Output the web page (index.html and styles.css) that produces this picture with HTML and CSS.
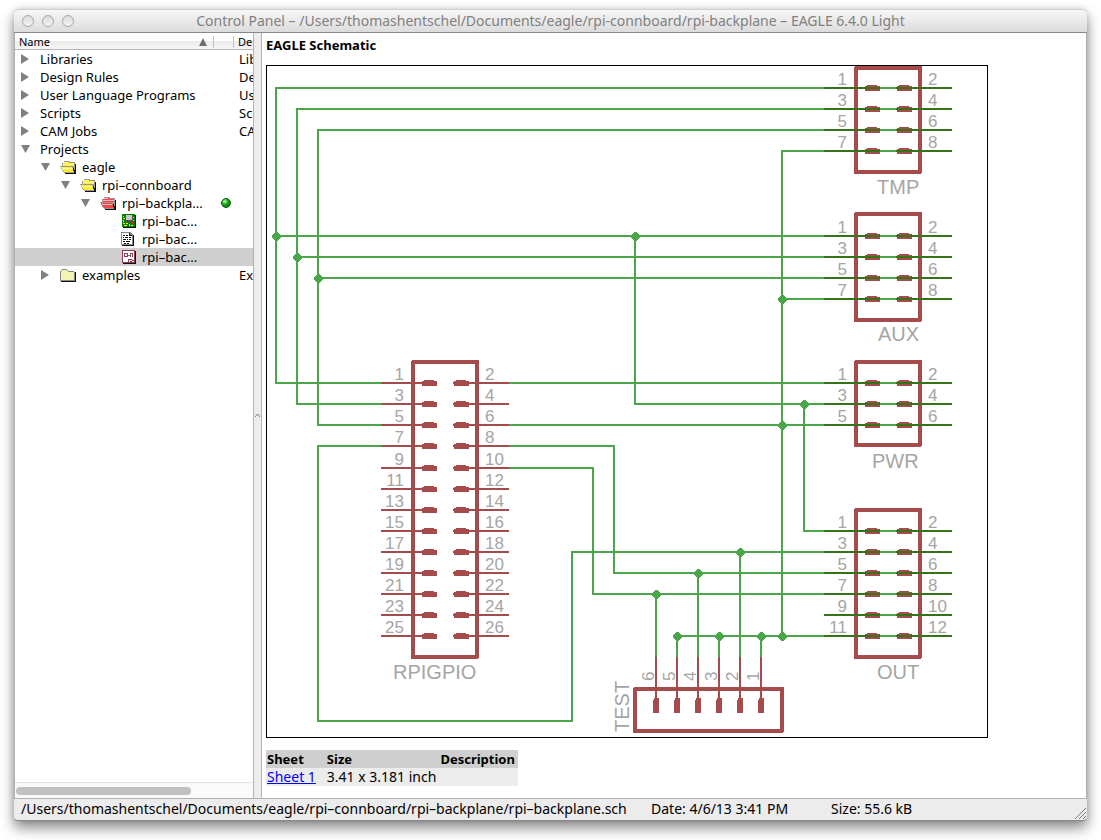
FILE: index.html
```html
<!DOCTYPE html>
<html lang="en">
<head>
<meta charset="utf-8">
<title>Control Panel</title>
<link rel="stylesheet" href="styles.css">
</head>
<body>
<svg class="defs" aria-hidden="true">
  <defs>
    <symbol id="folder-open" viewBox="0 0 16 13">
      <path fill="#999" d="M4 0h5l1 1h4l1 1v9h1v2H5L3 11 0 5h2V2h2z"/>
      <path fill="currentColor" d="M4 1h4l1 1h5v3H3V2h1z"/>
      <path fill="currentColor" d="M1 6h11l2 5H4z"/>
      <path fill="#fff" d="M4 1h4v1H4zM3 3h11v1H3zM2 7h10v1H2z" opacity=".6"/>
      <path fill="#111" d="M15 3h1v10H5v-1h10zM13 7h1v2h1v3h-1z"/>
    </symbol>
    <symbol id="folder" viewBox="0 0 16 13">
      <path fill="#888" d="M2 0h5v1h1v1h6v1h1v9H0V2h1V1h1z"/>
      <path fill="currentColor" d="M2 1h5v1h1v1h6v8H1V2h1z"/>
      <path fill="#111" d="M15 3h1v10H1v-1h14z"/>
    </symbol>
    <symbol id="board" viewBox="0 0 15 14">
      <path fill="#008000" d="M1 0h13v13H1z"/>
      <path fill="#111" d="M14 1h1v13H2v-1h12z"/>
      <path fill="#c8c8c8" d="M5 1h6v5H5z"/><path fill="#555" d="M5 6h1v2H5zM7 6h1v2H7zM9 6h1v2H9zM11 2h1v5h-1z"/>
      <path fill="#ffee00" d="M2 2h1v1H2zM2 4h2v1H2zM2 6h1v2H2zM2 9h2v1H2zM5 9h2v1H5zM3 11h3v1H3zM8 10h1v2H8zM12 3h1v1h-1zM10 11h2v1h-2zM12 6h1v1h-1z"/>
      <path fill="#f01010" d="M11 8h2v2h-2z"/>
    </symbol>
    <symbol id="document" viewBox="0 0 15 14">
      <path fill="#888" d="M0 0h9l3 3v10H0z"/><path fill="#fff" d="M1 1h7v3h3v8H1z"/>
      <path fill="#111" d="M12 3h1v11H1v-1h11zM8 1h1v2h2v1H8zM2 3h2v1H2zM5 3h2v1H5zM2 5h1v1H2zM4 5h3v1H4zM8 5h2v1H8zM2 7h3v1H2zM6 7h1v1H6zM8 7h2v1H8zM2 9h2v1H2zM5 9h4v1H5zM3 11h2v1H3zM6 11h2v1H6z"/>
    </symbol>
    <symbol id="schematic" viewBox="-1 0 15 14">
      <path fill="#8f3b52" d="M0 0h13v13H0z"/><path fill="#fff" d="M1 1h11v11H1z"/><path fill="#111" d="M13 1h1v13H1v-1h12z"/>
      <path fill="#8f3b52" d="M2 3h4v1H2zM2 6h4v1H2zM5 3h1v4H5zM2 3h1v4H2zM8 3h3v1H8zM8 3h1v4H8zM10 3h1v4h-1zM6 9h4v1H6zM6 9h1v3H6zM10 10h2v1h-2zM8 11h2v1H8z"/>
      <path fill="#2b9b55" d="M6 5h2v1H6z"/>
    </symbol>
    <g id="row-dual">
      <path fill="#a54b4b" d="M41 -2h2v-1h10v1h3v5H41zM73 -2h2v-1h10v1h3v5H73z"/>
      <path class="pin-net" d="M0 0H128"/><path class="net" d="M56 0H72"/>
    </g>
    <g id="row-gpio">
      <path class="part-line" d="M0 0H42M87 0H128"/>
      <path fill="#a54b4b" d="M41 -2h2v-1h10v1h3v5H41zM72 -1h1v-1h2v-1h10v1h3v5H73v-2h-1z"/>
    </g>
    <g id="pin-test">
      <path class="part-line" d="M0 0V42"/>
      <path fill="#a54b4b" d="M-2 41H3V56H-3V43h1z"/>
    </g>
    <path id="joint" fill="#4ba54b" d="M-1 -4H2V-3H3V-2H4V-1H5V2H4V3H3V4H2V5H-1V4H-2V3H-3V2H-4V-1H-3V-2H-2V-3H-1z"/>
  </defs>
</svg>

<div class="window">
  <header class="titlebar">
    <div class="lights"><button class="light" aria-label="Close"></button><button class="light" aria-label="Minimize"></button><button class="light" aria-label="Zoom"></button></div>
    <h1 class="title">Control Panel – /Users/thomashentschel/Documents/eagle/rpi-connboard/rpi-backplane – EAGLE 6.4.0 Light</h1>
  </header>

  <main class="panes">
    <nav class="browser">
      <div class="columns"><span class="col-name">Name<i class="sort"></i></span><span class="col-flag"></span><span class="col-desc">De</span></div>
      <ul class="tree">
        <li class="item"><i class="arrow closed"></i><span class="label">Libraries</span><span class="desc">Lib</span></li>
        <li class="item"><i class="arrow closed"></i><span class="label">Design Rules</span><span class="desc">De</span></li>
        <li class="item"><i class="arrow closed"></i><span class="label">User Language Programs</span><span class="desc">Us</span></li>
        <li class="item"><i class="arrow closed"></i><span class="label">Scripts</span><span class="desc">Sc</span></li>
        <li class="item"><i class="arrow closed"></i><span class="label">CAM Jobs</span><span class="desc">CA</span></li>
        <li class="item"><i class="arrow"></i><span class="label">Projects</span></li>
        <li class="item depth-1"><i class="arrow"></i><svg class="icon yellow"><use href="#folder-open"/></svg><span class="label">eagle</span></li>
        <li class="item depth-2"><i class="arrow"></i><svg class="icon yellow"><use href="#folder-open"/></svg><span class="label">rpi–connboard</span></li>
        <li class="item depth-3"><i class="arrow"></i><svg class="icon red"><use href="#folder-open"/></svg><span class="label">rpi–backpla...</span><i class="active-dot"></i></li>
        <li class="item depth-4"><svg class="icon file"><use href="#board"/></svg><span class="label">rpi–bac...</span></li>
        <li class="item depth-4"><svg class="icon file"><use href="#document"/></svg><span class="label">rpi–bac...</span></li>
        <li class="item depth-4 selected"><svg class="icon file"><use href="#schematic"/></svg><span class="label">rpi–bac...</span></li>
        <li class="item depth-1"><i class="arrow closed"></i><svg class="icon pale"><use href="#folder"/></svg><span class="label">examples</span><span class="desc">Ex</span></li>
      </ul>
      <div class="scrollbar"><div class="thumb"></div></div>
    </nav>

    <div class="splitter"><svg width="5" height="6" viewBox="0 0 5 6"><path d="M0 4L2.500 1L5 4" fill="none" stroke="#777"/></svg></div>

    <section class="preview">
      <h2 class="heading">EAGLE Schematic</h2>
      <svg class="sheet" width="722" height="673" viewBox="266 65 722 673" role="img" aria-label="Schematic sheet 1">
        <path class="frame" d="M266.500 65.500H987.500V737.500H266.500z"/>
        <path class="net" d="M824 88H276V383H382M824 109H297V404H382M824 130H318V425H382M824 151H782V636M276 236H824M297 257H824M318 278H824M782 299H824M635 236V404H824M804 404V531H824M509 383H824M509 425H824M509 446H614V573H824M509 468H593V594H824M382 446H318V721H572V552H824M677 636H824M656 594V658M677 636V658M698 573V658M719 636V658M740 552V658M761 636V658"/>
        <g class="body"><path d="M856 68H920V172H856zM856 214H920V320H856zM856 362H920V445H856zM856 510H920V657H856zM413 362H477V657H413zM635 689H782V731H635z"/></g>
        <use href="#row-dual" x="824" y="88"/><use href="#row-dual" x="824" y="109"/><use href="#row-dual" x="824" y="130"/><use href="#row-dual" x="824" y="151"/>
        <use href="#row-dual" x="824" y="236"/><use href="#row-dual" x="824" y="257"/><use href="#row-dual" x="824" y="278"/><use href="#row-dual" x="824" y="299"/>
        <use href="#row-dual" x="824" y="383"/><use href="#row-dual" x="824" y="404"/><use href="#row-dual" x="824" y="425"/>
        <use href="#row-dual" x="824" y="531"/><use href="#row-dual" x="824" y="552"/><use href="#row-dual" x="824" y="573"/><use href="#row-dual" x="824" y="594"/><use href="#row-dual" x="824" y="615"/><use href="#row-dual" x="824" y="636"/>
        <use href="#row-gpio" x="381" y="383"/><use href="#row-gpio" x="381" y="404"/><use href="#row-gpio" x="381" y="425"/><use href="#row-gpio" x="381" y="446"/><use href="#row-gpio" x="381" y="468"/><use href="#row-gpio" x="381" y="489"/><use href="#row-gpio" x="381" y="510"/><use href="#row-gpio" x="381" y="531"/><use href="#row-gpio" x="381" y="552"/><use href="#row-gpio" x="381" y="573"/><use href="#row-gpio" x="381" y="594"/><use href="#row-gpio" x="381" y="615"/><use href="#row-gpio" x="381" y="636"/>
        <use href="#pin-test" x="656" y="657"/><use href="#pin-test" x="677" y="657"/><use href="#pin-test" x="698" y="657"/><use href="#pin-test" x="719" y="657"/><use href="#pin-test" x="740" y="657"/><use href="#pin-test" x="761" y="657"/>
        <use href="#joint" x="276" y="236"/><use href="#joint" x="297" y="257"/><use href="#joint" x="318" y="278"/><use href="#joint" x="635" y="236"/><use href="#joint" x="782" y="299"/><use href="#joint" x="804" y="404"/><use href="#joint" x="782" y="425"/><use href="#joint" x="740" y="552"/><use href="#joint" x="698" y="573"/><use href="#joint" x="656" y="594"/><use href="#joint" x="677" y="636"/><use href="#joint" x="719" y="636"/><use href="#joint" x="761" y="636"/><use href="#joint" x="782" y="636"/>
        <g class="pin-number end">
          <text x="847" y="85">1</text><text x="847" y="106">3</text><text x="847" y="127">5</text><text x="847" y="148">7</text>
          <text x="847" y="233">1</text><text x="847" y="254">3</text><text x="847" y="275">5</text><text x="847" y="296">7</text>
          <text x="847" y="380">1</text><text x="847" y="401">3</text><text x="847" y="422">5</text>
          <text x="847" y="528">1</text><text x="847" y="549">3</text><text x="847" y="570">5</text><text x="847" y="591">7</text><text x="847" y="612">9</text><text x="847" y="633">11</text>
          <text x="404" y="380">1</text><text x="404" y="401">3</text><text x="404" y="422">5</text><text x="404" y="443">7</text><text x="404" y="465">9</text><text x="404" y="486">11</text><text x="404" y="507">13</text><text x="404" y="528">15</text><text x="404" y="549">17</text><text x="404" y="570">19</text><text x="404" y="591">21</text><text x="404" y="612">23</text><text x="404" y="633">25</text>
        </g>
        <g class="pin-number">
          <text x="928" y="85">2</text><text x="928" y="106">4</text><text x="928" y="127">6</text><text x="928" y="148">8</text>
          <text x="928" y="233">2</text><text x="928" y="254">4</text><text x="928" y="275">6</text><text x="928" y="296">8</text>
          <text x="928" y="380">2</text><text x="928" y="401">4</text><text x="928" y="422">6</text>
          <text x="928" y="528">2</text><text x="928" y="549">4</text><text x="928" y="570">6</text><text x="928" y="591">8</text><text x="928" y="612">10</text><text x="928" y="633">12</text>
          <text x="485" y="380">2</text><text x="485" y="401">4</text><text x="485" y="422">6</text><text x="485" y="443">8</text><text x="485" y="465">10</text><text x="485" y="486">12</text><text x="485" y="507">14</text><text x="485" y="528">16</text><text x="485" y="549">18</text><text x="485" y="570">20</text><text x="485" y="591">22</text><text x="485" y="612">24</text><text x="485" y="633">26</text>
          <text transform="translate(654 681) rotate(-90)">6</text><text transform="translate(675 681) rotate(-90)">5</text><text transform="translate(696 681) rotate(-90)">4</text><text transform="translate(717 681) rotate(-90)">3</text><text transform="translate(738 681) rotate(-90)">2</text><text transform="translate(759 681) rotate(-90)">1</text>
        </g>
        <g class="part-name">
          <text x="877" y="194">TMP</text><text x="878" y="341">AUX</text><text x="872" y="468">PWR</text><text x="877" y="679">OUT</text><text x="393" y="679">RPIGPIO</text>
          <text transform="translate(629 732) rotate(-90)">TEST</text>
        </g>
      </svg>
      <table class="sheets">
        <thead><tr><th>Sheet</th><th>Size</th><th>Description</th></tr></thead>
        <tbody><tr><td><a href="#sheet-1">Sheet 1</a></td><td>3.41 x 3.181 inch</td><td></td></tr></tbody>
      </table>
    </section>
  </main>

  <footer class="status">
    <span class="path">/Users/thomashentschel/Documents/eagle/rpi–connboard/rpi–backplane/rpi–backplane.sch</span>
    <span class="date">Date: 4/6/13 3:41 PM</span>
    <span>Size: 55.6 kB</span>
    <svg class="grip" width="11" height="11" viewBox="0 0 11 11"><path d="M0 11L11 0M4 11L11 4M8 11L11 8" stroke="#777" fill="none"/></svg>
  </footer>
</div>
</body>
</html>
```
FILE: styles.css
```css
* { box-sizing: border-box; }
body {
  margin: 0;
  padding: 9px 14px 19px;
  min-height: 100vh;
  display: flex;
  background: #fff;
  color: #000;
  font: 13px/18px "Noto Sans", "Open Sans", sans-serif;
  overflow: hidden;
}
.defs { position: absolute; width: 0; height: 0; }
.window {
  flex: 1;
  min-width: 0;
  display: flex;
  flex-direction: column;
  background: #ececec;
  border-radius: 5px 5px 4px 4px;
  border-bottom: 1px solid #888;
  box-shadow: 0 7px 14px rgba(0, 0, 0, .45), 0 0 6px rgba(0, 0, 0, .15);
}
.titlebar {
  height: 24px;
  display: flex;
  align-items: center;
  padding: 0 8px;
  border-top: 1px solid #d0d0d0;
  border-bottom: 1px solid #888;
  border-radius: 5px 5px 0 0;
  background: linear-gradient(#f7f7f7, #dcdcdc);
}
.lights { display: flex; gap: 8px; width: 64px; }
.light {
  width: 12px;
  height: 12px;
  padding: 0;
  border: 1px solid #a8a8a8;
  border-radius: 50%;
  background: linear-gradient(#dadada, #f4f4f4);
}
.title {
  flex: 1;
  margin: 0 64px 0 0;
  text-align: center;
  white-space: nowrap;
  color: #808080;
  font-size: 14px;
  font-weight: 400;
}
.panes { flex: 1; min-height: 0; display: flex; border: 1px solid #b0b0b0; border-top: 0; }
.browser {
  flex: 0 0 239px;
  display: flex;
  flex-direction: column;
  overflow: hidden;
  background: #fff;
  border-right: 1px solid #b4b4b4;
}
.columns {
  height: 17px;
  display: flex;
  align-items: center;
  padding-top: 1px;
  border-bottom: 1px solid #b4b4b4;
  background: linear-gradient(#fff 50%, #ebebeb 50%, #f6f6f6);
  font-size: 11px;
  line-height: 16px;
}
.col-name {
  flex: 0 0 199px;
  height: 12px;
  display: flex;
  align-items: center;
  justify-content: space-between;
  padding: 0 6px 0 4px;
  border-right: 1px solid #c0c0c0;
}
.sort { border: 4px solid transparent; border-top: 0; border-bottom: 8px solid #6e6e6e; }
.col-flag { flex: 0 0 20px; height: 12px; border-right: 1px solid #c0c0c0; }
.col-desc { padding-left: 4px; }
.tree { flex: 1; margin: 0; padding: 0; list-style: none; }
.item { display: flex; align-items: center; height: 18px; padding-left: 6px; white-space: nowrap; }
.arrow { flex: 0 0 19px; }
.arrow::before {
  content: "";
  display: block;
  width: 9px;
  height: 8px;
  background: #808080;
  clip-path: polygon(0 0, 100% 0, 50% 100%);
}
.arrow.closed::before { width: 8px; height: 10px; clip-path: polygon(0 0, 100% 50%, 0 100%); }
.label { flex: 0 0 199px; }
.item > .icon + .label { flex: 1; }
.depth-1 { padding-left: 26px; }
.depth-2 { padding-left: 46px; }
.depth-3 { padding-left: 66px; }
.depth-4 { padding-left: 106px; }
.icon { flex: none; width: 16px; height: 13px; margin-right: 6px; shape-rendering: crispEdges; }
.icon.file { width: 15px; height: 14px; }
.yellow { color: #ffee30; }
.red { color: #f04848; }
.pale { color: #f6f2b4; }
.selected { background: #cfcfcf; }
.desc { flex: none; width: 14px; overflow: hidden; }
.active-dot {
  width: 10px;
  height: 10px;
  margin-right: 22px;
  border: 1px solid #075a07;
  border-radius: 50%;
  background: radial-gradient(circle at 35% 30%, #b0ffb0, #10a010 45%, #087008);
}
.scrollbar { height: 16px; padding: 4px 1px; border-top: 1px solid #e4e4e4; background: #fafafa; }
.thumb { width: 74%; height: 8px; border-radius: 4px; background: #c1c1c1; }
.splitter { flex: 0 0 7px; display: flex; align-items: center; justify-content: center; background: #ececec; }
.preview { flex: 1; min-width: 0; padding: 3px 4px; border-left: 1px solid #b4b4b4; background: #fff; }
.heading { margin: 0 0 11px; font-size: 13px; line-height: 18px; font-weight: 700; }
.sheet { display: block; max-width: 100%; shape-rendering: crispEdges; font-family: "Liberation Sans", Arial, sans-serif; }
.frame { fill: none; stroke: #000; }
.net, .pin-net, .part-line { fill: none; stroke-width: 2; }
.net { stroke: #4ba54b; }
.pin-net { stroke: #357317; }
.part-line { stroke: #a54b4b; }
.body { fill: none; stroke: #a54b4b; stroke-width: 4; stroke-linejoin: round; }
.pin-number, .part-name { fill: #a5a5a5; font-size: 17px; }
.part-name { font-size: 20px; }
.end { text-anchor: end; }
.sheets { margin-top: 12px; border-collapse: collapse; background: #ececec; }
.sheets th, .sheets td { height: 18px; padding: 0 10px 0 1px; line-height: 18px; text-align: left; white-space: nowrap; }
.sheets th { background: #cfcfcf; }
.sheets td { font-size: 14px; }
.sheets th:last-child { padding: 0 3px 0 1px; }
.sheets td:nth-child(2) { padding-right: 3px; }
.sheets a { color: #00f; }
.status {
  position: relative;
  height: 21px;
  display: flex;
  align-items: center;
  padding: 0 0 2px 7px;
  font-size: 14px;
  white-space: nowrap;
}
.path { flex: 0 0 630px; }
.date { flex: 0 0 180px; }
.grip { position: absolute; right: 1px; bottom: 1px; }
```
